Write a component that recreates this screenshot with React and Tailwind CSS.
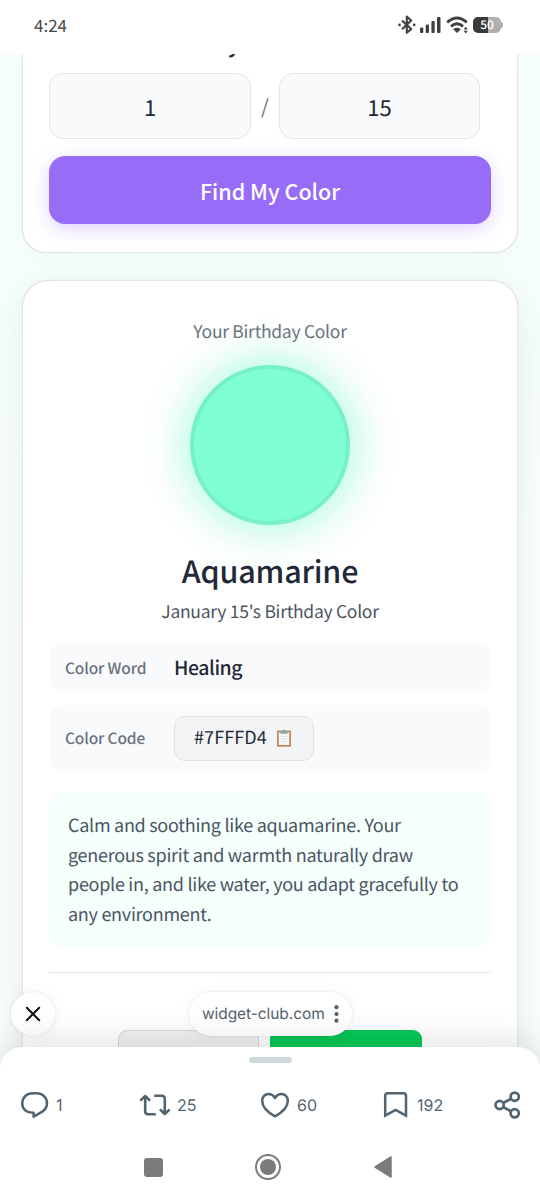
const jp = "font-['Noto_Sans_CJK_JP','Noto_Sans',sans-serif] [text-rendering:geometricPrecision]";

function StatusBar() {
  return (
    <header className="relative z-10 flex h-[54px] shrink-0 items-start justify-between bg-white pt-4 pr-[37px] pl-[34px] text-[#454545]">
      <span className="-mt-px text-[17px] leading-[20px]">4:24</span>
      <div className="flex h-[18px] items-center">
        <svg width="18" height="20" viewBox="0 0 18 20" fill="none" stroke="#3f3f3f" strokeWidth="2.1">
          <path d="M4 5.5l9.2 8.6-4.4 3.7V1.6l4.4 3.9L4 14.3" strokeLinejoin="round" />
          <circle cx="1.5" cy="9.9" r="1.3" fill="#3f3f3f" stroke="none" />
          <circle cx="16.2" cy="9.9" r="1.3" fill="#3f3f3f" stroke="none" />
        </svg>
        <svg className="ml-[4px]" width="21" height="18" viewBox="0 0 21 18" fill="#3f3f3f">
          <rect x="0" y="11.5" width="3.3" height="5.5" rx="1" />
          <rect x="5.7" y="8.5" width="3.3" height="8.5" rx="1" />
          <rect x="11.4" y="5" width="3.3" height="12" rx="1" />
          <rect x="17" y="1" width="3.5" height="16" rx="1" />
        </svg>
        <svg className="ml-[5px]" width="23" height="18" viewBox="0 0 23 18" fill="none" stroke="#3f3f3f" strokeWidth="2.8">
          <path d="M1.2 6.4Q11 -2.4 20.8 6.4" />
          <path d="M5 10.4Q11 5.2 17 10.4" />
          <path d="M7.2 13.2Q11 10.5 14.8 13.2L11 17Z" fill="#3f3f3f" stroke="none" />
          <path d="M17.6 13.5L19.7 10.8L21.8 13.5ZM17.6 14.8L19.7 17.4L21.8 14.8Z" fill="#3f3f3f" stroke="none" />
        </svg>
        <div className="ml-[4px] flex items-center">
          <div className="flex h-4 w-7 items-center justify-center rounded-[5px] bg-linear-to-r from-[#3a3a3a] from-55% to-[#b0b0b0] to-55% text-[12px] leading-4 font-medium text-white">
            50
          </div>
          <div className="h-[6px] w-[2px] rounded-r bg-[#b0b0b0]" />
        </div>
      </div>
    </header>
  );
}

function DateCard() {
  return (
    <section className="h-[199px] shrink-0 rounded-b-[24px] border-x border-b border-[#e4e6e8] bg-white px-[26px] shadow-[0_0_1px_rgba(0,0,0,0.15),0_4px_20px_rgba(0,0,0,0.03)]">
      <div className="flex h-[19px] items-start overflow-hidden pl-[179px]">
        <span className="-mt-[24px] text-[20px] leading-[30px] font-bold text-[#1f2937]">y</span>
      </div>
      <div className="flex items-center text-[22px] text-[#1f2937]">
        <div className="flex h-[66px] w-[202px] items-center justify-center rounded-[14px] border border-[#e4e5e8] bg-[#f9fafc] pt-[2px]">
          1
        </div>
        <span className="w-[28px] text-center text-[20px] text-[#6b7280]">/</span>
        <div className="flex h-[66px] w-[201px] items-center justify-center rounded-[14px] border border-[#e4e5e8] bg-[#f9fafc] pt-[2px]">
          15
        </div>
      </div>
      <button className="mt-[17px] h-[68px] w-full rounded-[16px] bg-[#976cf6] pt-[2px] text-[21.5px] font-medium text-white shadow-[0_5px_18px_rgba(151,108,246,0.3)]">
        Find My Color
      </button>
    </section>
  );
}

function ClipboardIcon() {
  return (
    <svg width="14" height="18" viewBox="0 0 14 18">
      <rect x="0.9" y="2.4" width="12.2" height="14.4" fill="#f6f6f4" stroke="#c48257" strokeWidth="1.7" />
      <path d="M3.5 4.7V2.3H5.2Q5.5 0.4 7 0.4T8.8 2.3H10.5V4.7Z" fill="#83aaa6" />
      <path d="M3.5 7.5h7M3.5 10h7M3.5 12.5h7" stroke="#dedfdf" strokeWidth="0.8" />
    </svg>
  );
}

function ResultCard() {
  return (
    <section className="mt-[27px] flex h-[820px] shrink-0 flex-col items-center rounded-[27px] border border-[#e4e6e8] bg-white px-[26px] pt-[37px] shadow-[0_0_1px_rgba(0,0,0,0.15),0_8px_40px_rgba(0,0,0,0.08)]">
      <p className="h-7 text-[17.5px] leading-7 tracking-[-0.28px] text-[#6b7280]">Your Birthday Color</p>
      <div className="mt-[19px] size-[160px] shrink-0 rounded-full border-4 border-black/6 bg-[#7fffd4] bg-clip-border shadow-[0_0_44px_rgba(127,255,212,0.8),0_0_90px_rgba(0,0,0,0.04)]" />
      <h1 className="mt-[21px] h-[48px] text-[30.5px] leading-[48px] font-medium tracking-[-0.2px] text-[#1f2937]">
        Aquamarine
      </h1>
      <p className="mt-[4px] h-7 text-[17.5px] leading-7 tracking-[-0.28px] text-[#4b5563]">January 15's Birthday Color</p>
      <div className="mt-[17px] flex h-[48px] w-full shrink-0 items-center rounded-[13px] bg-[#f9fafc] pl-4">
        <span className="w-[109px] pt-[4px] text-[15.5px] font-medium tracking-[-0.15px] text-[#6b7280]">Color Word</span>
        <span className="text-[19.5px] font-medium tracking-[-0.45px] text-[#1f2937]">Healing</span>
      </div>
      <div className="mt-[14px] flex h-[66px] w-full shrink-0 items-center rounded-[13px] bg-[#f9fafc] pl-4">
        <span className="w-[109px] pt-px text-[15.5px] font-medium tracking-[-0.15px] text-[#6b7280]">Color Code</span>
        <div className="flex h-[45px] w-[140px] items-center rounded-[11px] border border-[#e2e3e6] bg-[#f3f4f6] pl-[19px] text-[18px] text-[#1f2937]">
          <span className="w-[83px] -translate-y-px tracking-[0.1px]">#7FFFD4</span>
          <ClipboardIcon />
        </div>
      </div>
      <p className="mt-[21px] h-[155px] w-full shrink-0 rounded-[14px] bg-[#f5fffc] px-[19px] pt-[19px] text-[18px] leading-[29.6px] tracking-[-0.28px] whitespace-nowrap text-[#4b5563]">
        Calm and soothing like aquamarine. Your
        <br />
        generous spirit and warmth naturally draw
        <br />
        people in, and like water, you adapt gracefully to
        <br />
        any environment.
      </p>
      <div className="mt-[25px] flex w-full shrink-0 justify-center gap-[11px] border-t border-[#e2e4e6] pt-[57px]">
        <div className="h-[50px] w-[141px] rounded-[9px] border border-[#d8d9dc] bg-[#eff0f2]" />
        <div className="h-[50px] w-[152px] rounded-[9px] bg-[#06c755]" />
      </div>
    </section>
  );
}

function BrowserPills() {
  return (
    <>
      <button className="absolute top-[992px] left-[11px] flex size-[44px] items-center justify-center rounded-full bg-white shadow-[0_0_3px_rgba(0,0,0,0.1),0_0_16px_rgba(0,0,0,0.04)]">
        <svg width="16" height="16" viewBox="0 0 16 16" stroke="#111" strokeWidth="2" strokeLinecap="round">
          <path d="M1.8 1.8l12.4 12.4M14.2 1.8L1.8 14.2" />
        </svg>
      </button>
      <div className="absolute top-[992px] left-[189px] flex h-[44px] w-[163px] items-center rounded-full bg-white pl-[13px] font-[Inter,sans-serif] text-[15.5px] tracking-[-0.08px] text-[#536471] shadow-[0_0_3px_rgba(0,0,0,0.1),0_0_16px_rgba(0,0,0,0.04)]">
        <span className="w-[132px]">widget-club.com</span>
        <svg width="5" height="18" viewBox="0 0 5 18" fill="#536471">
          <circle cx="2.5" cy="2.2" r="2.1" />
          <circle cx="2.5" cy="9" r="2.1" />
          <circle cx="2.5" cy="15.7" r="2.1" />
        </svg>
      </div>
    </>
  );
}

function ActionSheet() {
  return (
    <footer className="absolute inset-x-0 bottom-0 h-[153px] rounded-t-[22px] bg-white font-[Inter,sans-serif] shadow-[0_-4px_36px_rgba(0,0,0,0.13)]">
      <div className="mx-auto mt-[10px] h-[6px] w-[43px] rounded-full bg-[#cfd9de]" />
      <div className="mt-[26px] flex h-8 items-center pl-5 text-[16px] text-[#536471]">
        <div className="flex w-[119px] items-center gap-[7px]">
          <svg width="29" height="28" viewBox="0 0 29 28" fill="none" stroke="#536471" strokeWidth="2.5" strokeLinejoin="round">
            <path d="M12.6 21.8C6.6 21.6 2.2 18.1 2.2 12.6C2.2 6.4 6.6 2.3 13 2.3H16.2C22.6 2.3 27 6.4 27 12.2C27 15.8 25.2 18.6 22.3 20.6L13.6 25.6V21.8Z" />
          </svg>
          <span>1</span>
        </div>
        <div className="flex w-[121px] items-center gap-[6px]">
          <svg width="32" height="28" viewBox="0 0 32 28" fill="none" stroke="#536471" strokeWidth="2.6" strokeLinejoin="round">
            <path d="M1.3 9.6L6.2 5L11.1 9.6M6.2 5.4V20.2Q6.2 23.3 9.3 23.3H16.8" />
            <path d="M30.7 18.4L25.8 23L20.9 18.4M25.8 22.6V8Q25.8 4.8 22.7 4.8H15.2" />
          </svg>
          <span>25</span>
        </div>
        <div className="flex w-[122px] items-center gap-[7px]">
          <svg width="30" height="28" viewBox="0 0 30 28" fill="none" stroke="#536471" strokeWidth="2.5" strokeLinejoin="round">
            <path d="M15 25.3C9 21.9 2.2 16.5 2.2 9.9C2.2 5.8 5 3 8.5 3C11.6 3 13.6 4.6 15 7C16.4 4.6 18.4 3 21.5 3C25 3 27.8 5.8 27.8 9.9C27.8 16.5 21 21.9 15 25.3Z" />
          </svg>
          <span>60</span>
        </div>
        <div className="flex w-[112px] items-center gap-[8px]">
          <svg width="27" height="28" viewBox="0 0 27 28" fill="none" stroke="#536471" strokeWidth="2.5">
            <path d="M3.2 24.6V4.9Q3.2 2.3 5.8 2.3H21.4Q24 2.3 24 4.9V24.6L13.6 18.9Z" />
          </svg>
          <span>192</span>
        </div>
        <svg width="27" height="28" viewBox="0 0 27 28" fill="none" stroke="#536471" strokeWidth="2.7">
          <circle cx="5.6" cy="14" r="4.1" />
          <circle cx="20.7" cy="5.7" r="4.1" />
          <circle cx="20.7" cy="22.3" r="4.1" />
          <path d="M9.2 12L17.1 7.7M9.2 16L17.1 20.3" />
        </svg>
      </div>
      <nav className="mt-[33px] flex h-[26px] items-center pl-[144px]">
        <div className="size-[19px] rounded-[3px] bg-[#7b7b7b]" />
        <div className="ml-[92px] flex size-[26px] items-center justify-center rounded-full border-2 border-[#7b7b7b]">
          <div className="size-4 rounded-full bg-[#7b7b7b]" />
        </div>
        <svg className="ml-[93px]" width="18" height="22" viewBox="0 0 18 22">
          <path d="M1 11L17 1V21Z" fill="#7b7b7b" stroke="#7b7b7b" strokeWidth="1.5" strokeLinejoin="round" />
        </svg>
      </nav>
    </footer>
  );
}

export default function App() {
  return (
    <div className={`relative flex h-[1200px] w-[540px] flex-col overflow-hidden bg-white ${jp}`}>
      <StatusBar />
      <main className="flex min-h-0 flex-1 flex-col overflow-hidden bg-linear-to-b from-[#f6fffc] to-[#fafffd] px-[22px]">
        <DateCard />
        <ResultCard />
      </main>
      <BrowserPills />
      <ActionSheet />
    </div>
  );
}
